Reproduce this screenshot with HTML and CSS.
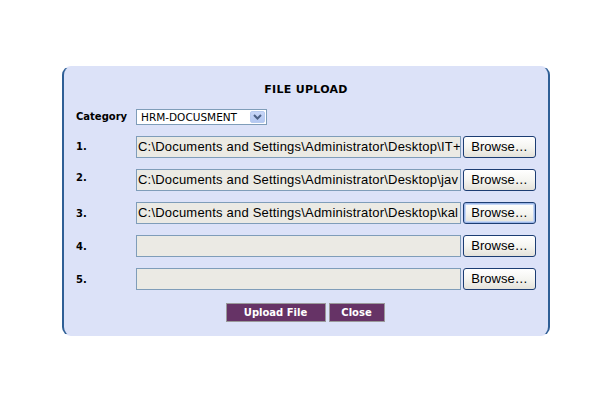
FILE: index.html
```html
<!DOCTYPE html>
<html>
<head>
<meta charset="utf-8">
<link rel="stylesheet" href="styles.css">
</head>
<body>
<div class="panel">
  <div class="title">FILE UPLOAD</div>
  <div class="form">
    <div class="label">Category</div>
    <div class="select-row">
      <div class="select">
        <span class="select-text">HRM-DOCUSMENT</span>
        <span class="select-btn">
          <svg width="9" height="6" viewBox="0 0 9 6"><path d="M1 1 L4.5 4.5 L8 1" fill="none" stroke="#4d6185" stroke-width="2"/></svg>
        </span>
      </div>
    </div>

    <div class="label num">1.</div>
    <div class="file-row">
      <div class="field">C:\Documents and Settings\Administrator\Desktop\IT+</div>
      <div class="browse">Browse…</div>
    </div>

    <div class="label num up">2.</div>
    <div class="file-row">
      <div class="field">C:\Documents and Settings\Administrator\Desktop\jav</div>
      <div class="browse">Browse…</div>
    </div>

    <div class="label num">3.</div>
    <div class="file-row">
      <div class="field">C:\Documents and Settings\Administrator\Desktop\kal</div>
      <div class="browse focus">Browse…</div>
    </div>

    <div class="label num">4.</div>
    <div class="file-row">
      <div class="field"></div>
      <div class="browse">Browse…</div>
    </div>

    <div class="label num">5.</div>
    <div class="file-row">
      <div class="field"></div>
      <div class="browse">Browse…</div>
    </div>
  </div>
  <div class="actions">
    <div class="btn upload">Upload File</div>
    <div class="btn close">Close</div>
  </div>
</div>
</body>
</html>
```
FILE: styles.css
```css
* { box-sizing: border-box; }
html, body { margin: 0; padding: 0; background: #ffffff; }
body { width: 600px; height: 400px; font-family: "DejaVu Sans", Verdana, sans-serif; }

.panel {
  margin: 66px 0 0 62px;
  width: 488px;
  height: 270px;
  background: #dce2f8;
  border-left: 2px solid #2f5f96;
  border-right: 2px solid #2f5f96;
  border-top: 1px solid #dce2f8;
  border-bottom: 1px solid #dce2f8;
  border-radius: 9px;
  padding: 16px 0 0 0;
  display: flex;
  flex-direction: column;
}

.title {
  font-weight: bold;
  font-size: 11px;
  line-height: 14px;
  height: 14px;
  text-align: center;
  color: #000;
  letter-spacing: 0.3px;
}

.form {
  margin-top: 12px;
  padding-left: 12px;
  display: grid;
  grid-template-columns: 60px 400px;
  grid-template-rows: 16px;
  grid-auto-rows: 22px;
  row-gap: 11px;
  align-items: center;
}

.select-row { height: 16px; align-self: start; }
.form > .label:first-child { align-self: start; line-height: 16px; height: 16px; }
.form > :nth-child(3), .form > :nth-child(4) { margin-top: -1px; }

.label {
  font-weight: bold;
  font-size: 10px;
  color: #000;
}
.up { margin-top: -5px; }

.select {
  width: 131px;
  height: 16px;
  background: #fff;
  border: 1px solid #7f9db9;
  display: flex;
  align-items: center;
  justify-content: space-between;
  padding: 0 1px 0 4px;
}
.select-text {
  font-size: 10.5px;
  color: #000;
}
.select-btn {
  width: 15px;
  height: 12px;
  background: linear-gradient(#c8d6f7, #b4c8f2);
  border: 1px solid #b8cbf0;
  border-radius: 2px;
  display: flex;
  align-items: center;
  justify-content: center;
}

.file-row {
  display: flex;
  gap: 2px;
  height: 22px;
}
.field {
  width: 325px;
  height: 22px;
  background: #ebeae4;
  border: 1px solid #7f9db9;
  font-family: "Liberation Sans", Arial, sans-serif;
  font-size: 13px;
  line-height: 20px;
  padding-left: 1px;
  letter-spacing: 0.2px;
  white-space: nowrap;
  overflow: hidden;
  color: #000;
}
.browse {
  width: 73px;
  height: 22px;
  border: 1px solid #1c3d73;
  border-radius: 3px;
  background: linear-gradient(#ffffff 0%, #f5f5f1 50%, #e4e2da 100%);
  font-family: "Liberation Sans", Arial, sans-serif;
  font-size: 13px;
  line-height: 20px;
  text-align: center;
  color: #000;
}
.browse.focus {
  box-shadow: inset 0 0 0 1px #9bb6e8, inset 0 0 0 2px #c6d7f4;
}

.actions {
  margin-top: 13px;
  display: flex;
  justify-content: center;
  gap: 3px;
  padding-right: 2px;
}
.btn {
  height: 19px;
  background: #663366;
  border: 1px solid #9a9a9a;
  color: #fff;
  font-weight: bold;
  font-size: 10px;
  line-height: 17px;
  text-align: center;
}
.upload { width: 100px; }
.close { width: 56px; }
```
